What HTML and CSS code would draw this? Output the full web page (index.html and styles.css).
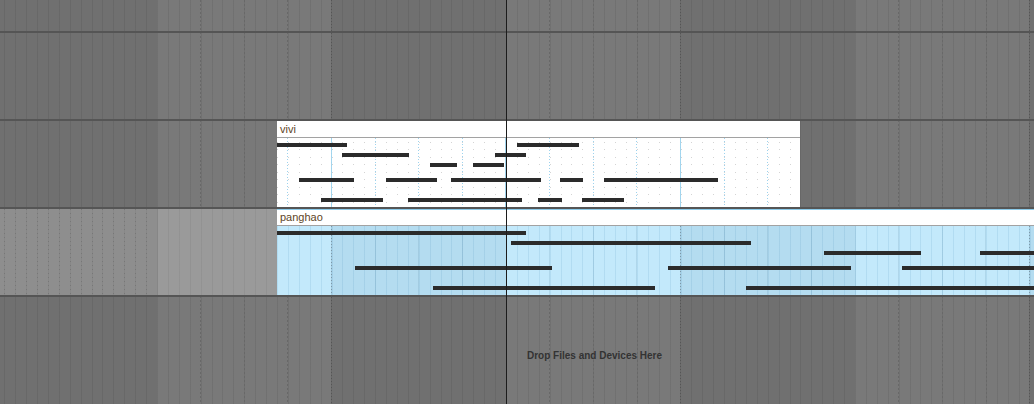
FILE: index.html
```html
<!DOCTYPE html>
<html>
<head>
<meta charset="utf-8">
<link rel="stylesheet" href="styles.css">
</head>
<body>
<div class="arrangement">
  <div class="track track-top"></div>
  <div class="track"></div>
  <div class="track">
    <div class="clip clip-vivi">
      <div class="clip-head">vivi</div>
      <div class="clip-body">
        <svg class="notes" width="523" height="69" viewBox="0 0 523 69">
          <rect x="0" y="5" width="70" height="4"/>
          <rect x="240" y="5" width="62" height="4"/>
          <rect x="65" y="15" width="67" height="4"/>
          <rect x="218" y="15" width="31" height="4"/>
          <rect x="153" y="25" width="27" height="4"/>
          <rect x="196" y="25" width="31" height="4"/>
          <rect x="22" y="40" width="55" height="4"/>
          <rect x="109" y="40" width="51" height="4"/>
          <rect x="174" y="40" width="90" height="4"/>
          <rect x="283" y="40" width="23" height="4"/>
          <rect x="327" y="40" width="114" height="4"/>
          <rect x="44" y="60" width="62" height="4"/>
          <rect x="131" y="60" width="114" height="4"/>
          <rect x="261" y="60" width="24" height="4"/>
          <rect x="305" y="60" width="42" height="4"/>
        </svg>
      </div>
    </div>
  </div>
  <div class="track track-selected">
    <div class="lane-sel"></div>
    <div class="clip clip-panghao">
      <div class="clip-head">panghao</div>
      <div class="clip-body">
        <svg class="notes" width="900" height="69" viewBox="0 0 900 69">
          <rect x="0" y="5" width="249" height="4"/>
          <rect x="234" y="15" width="240" height="4"/>
          <rect x="547" y="25" width="97" height="4"/>
          <rect x="703" y="25" width="150" height="4"/>
          <rect x="78" y="40" width="197" height="4"/>
          <rect x="391" y="40" width="183" height="4"/>
          <rect x="625" y="40" width="200" height="4"/>
          <rect x="156" y="60" width="222" height="4"/>
          <rect x="469" y="60" width="400" height="4"/>
        </svg>
      </div>
    </div>
  </div>
  <div class="drop">Drop Files and Devices Here</div>
  <div class="playhead"></div>
</div>
</body>
</html>
```

FILE: styles.css
```css
html, body {
  margin: 0;
  padding: 0;
}

body {
  background: #707070;
  font-family: "Liberation Sans", Arial, sans-serif;
}

.arrangement {
  position: relative;
  width: 1034px;
  height: 404px;
  overflow: hidden;
  display: flex;
  flex-direction: column;
  background:
    repeating-linear-gradient(90deg, transparent 0 4.3125px, rgba(0,0,0,0.07) 4.3125px 5.3125px, transparent 5.3125px 10.90625px),
    repeating-linear-gradient(90deg, #707070 0 157px, #797979 157px 331.5px, #707070 331.5px 349px);
}

/* dotted bar lines */
.arrangement::before {
  content: "";
  position: absolute;
  inset: 0;
  z-index: 0;
  background: repeating-linear-gradient(90deg, transparent 0 331px, #555 331px 332px, transparent 332px 349px);
  -webkit-mask-image: repeating-linear-gradient(180deg, #000 0 1px, transparent 1px 3px);
  mask-image: repeating-linear-gradient(180deg, #000 0 1px, transparent 1px 3px);
}

/* dashed beat lines in the light bars */
.arrangement::after {
  content: "";
  position: absolute;
  inset: 0;
  z-index: 0;
  background: repeating-linear-gradient(90deg,
    transparent 0 200px, #686868 200px 201px,
    transparent 201px 244px, #686868 244px 245px,
    transparent 245px 287.5px, #686868 287.5px 288.5px,
    transparent 288.5px 349px);
  -webkit-mask-image: repeating-linear-gradient(180deg, #000 0 2px, transparent 2px 4px);
  mask-image: repeating-linear-gradient(180deg, #000 0 2px, transparent 2px 4px);
}

.track {
  position: relative;
  z-index: 1;
  flex: none;
  display: flex;
  height: 86px;
  border-bottom: 2px solid #555;
}

.track-top {
  height: 31px;
}

.lane-sel {
  position: relative;
  flex: none;
  width: 277px;
  background:
    linear-gradient(90deg, transparent 0 157px, #868686 157px 158px, transparent 158px),
    repeating-linear-gradient(90deg, transparent 0 4.3125px, rgba(0,0,0,0.05) 4.3125px 5.3125px, transparent 5.3125px 10.90625px),
    linear-gradient(90deg, #8e8e8e 0 157px, #9a9a9a 157px);
}

.lane-sel::before {
  content: "";
  position: absolute;
  left: 0;
  top: 0;
  bottom: 0;
  width: 157px;
  background: repeating-linear-gradient(90deg, transparent 0 4.3125px, #777 4.3125px 5.3125px, transparent 5.3125px 10.90625px);
  -webkit-mask-image: repeating-linear-gradient(180deg, #000 0 1px, transparent 1px 4px);
  mask-image: repeating-linear-gradient(180deg, #000 0 1px, transparent 1px 4px);
}

.clip {
  display: flex;
  flex-direction: column;
  overflow: hidden;
}

.clip-head {
  flex: none;
  height: 16px;
  padding-left: 3px;
  background: #fff;
  border-bottom: 1px solid #a2a2a2;
  font-size: 11px;
  line-height: 16px;
  color: #5e4526;
  white-space: nowrap;
}

.clip-body {
  position: relative;
  flex: 1;
  isolation: isolate;
}

.notes {
  position: relative;
  z-index: 1;
  display: block;
  fill: #2b2b2b;
  shape-rendering: crispEdges;
}

/* vivi clip: white piano roll */
.clip-vivi {
  margin-left: 277px;
  width: 523px;
  flex: none;
}

.clip-vivi .clip-body {
  background:
    repeating-linear-gradient(90deg, transparent 0 54px, #a4d6ee 54px 55px, transparent 55px 174.5px),
    #fff;
}

.clip-vivi .clip-body::before {
  content: "";
  position: absolute;
  inset: 0;
  background: repeating-linear-gradient(90deg, transparent 0 10.5px, #9dd3ee 10.5px 11.5px, transparent 11.5px 43.625px);
  -webkit-mask-image: repeating-linear-gradient(180deg, #000 0 1px, transparent 1px 3px);
  mask-image: repeating-linear-gradient(180deg, #000 0 1px, transparent 1px 3px);
}

.clip-vivi .clip-body::after {
  content: "";
  position: absolute;
  inset: 0;
  background: repeating-linear-gradient(90deg, #d4d4d4 0 1px, transparent 1px 10.90625px);
  -webkit-mask-image: repeating-linear-gradient(180deg, transparent 0 4px, #000 4px 5px, transparent 5px 7.5px);
  mask-image: repeating-linear-gradient(180deg, transparent 0 4px, #000 4px 5px, transparent 5px 7.5px);
}

/* panghao clip: selected blue */
.clip-panghao {
  flex: 1;
  min-width: 0;
}

.clip-panghao .clip-head {
  height: 15px;
  line-height: 15px;
  border-top: 1px solid #8ccbea;
}

.clip-panghao .clip-body {
  background:
    repeating-linear-gradient(90deg, transparent 0 10.5px, rgba(70,120,150,0.16) 10.5px 11.5px, transparent 11.5px 43.625px),
    repeating-linear-gradient(90deg, rgba(60,130,175,0.13) 0 1px, transparent 1px 10.90625px),
    repeating-linear-gradient(90deg, #c3e9fb 0 54.5px, #b4dcf0 54.5px 229px, #c3e9fb 229px 349px);
}

.clip-panghao .clip-body::before {
  content: "";
  position: absolute;
  inset: 0;
  background: repeating-linear-gradient(90deg, transparent 0 54px, #7d98a8 54px 55px, transparent 55px 349px);
  -webkit-mask-image: repeating-linear-gradient(180deg, #000 0 1px, transparent 1px 3px);
  mask-image: repeating-linear-gradient(180deg, #000 0 1px, transparent 1px 3px);
}

.drop {
  position: relative;
  z-index: 1;
  flex: 1;
  padding: 54px 0 0 527px;
  font-size: 10px;
  font-weight: bold;
  line-height: 10px;
  color: #333;
  white-space: nowrap;
}

.playhead {
  position: absolute;
  left: 506px;
  top: 0;
  bottom: 0;
  width: 1px;
  background: #1c1c1c;
  z-index: 3;
}
```
